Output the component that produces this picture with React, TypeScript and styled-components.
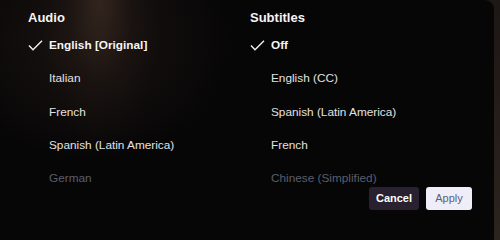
import React from "react";
import styled, { createGlobalStyle } from "styled-components";

const Global = createGlobalStyle`
  html, body { margin: 0; padding: 0; background: #070607; }
  body { width: 500px; min-height: 219px; overflow: hidden; }
  #root { width: 500px; }
`;

const Screen = styled.div`
  width: 500px;
  height: 100vh;
  min-height: 219px;
  display: flex;
  background: linear-gradient(180deg, #1d1715 0%, #2b231e 100%);
`;

const Panel = styled.div`
  width: 494px;
  height: 100%;
  box-sizing: border-box;
  padding: 10px 0 0 28px;
  border-radius: 0 9px 0 0;
  background:
    radial-gradient(ellipse 60px 150px at 100px 0px, rgba(58, 42, 33, 0.8), rgba(40, 28, 22, 0.3) 55%, rgba(0, 0, 0, 0) 100%),
    radial-gradient(ellipse 140px 120px at 90px 40px, rgba(36, 27, 23, 0.65), rgba(0, 0, 0, 0) 100%),
    #070607;
  font-family: "Liberation Sans", Arial, sans-serif;
  display: flex;
  flex-direction: column;
`;

const Columns = styled.div`
  display: grid;
  grid-template-columns: 222px 1fr;
`;

const Column = styled.div`
  display: flex;
  flex-direction: column;
`;

const Heading = styled.div`
  font-size: 13px;
  line-height: 16px;
  font-weight: 700;
  color: #f4f4f4;
  margin-bottom: 11px;
`;

const List = styled.div`
  display: flex;
  flex-direction: column;
  gap: 17.3px;
`;

const Row = styled.div<{ $state: "selected" | "normal" | "dim" }>`
  display: flex;
  align-items: center;
  height: 16px;
  line-height: 16px;
  font-size: 11.8px;
  font-weight: ${(p) => (p.$state === "selected" ? 700 : 400)};
  color: ${(p) =>
    p.$state === "selected" ? "#f6f6f6" : p.$state === "dim" ? "#5a5e6a" : "#e2e2e2"};
`;

const CheckSlot = styled.span`
  width: 21px;
  flex: none;
  display: flex;
  align-items: center;
`;

const Footer = styled.div`
  display: flex;
  justify-content: flex-end;
  gap: 7px;
  padding-right: 22px;
  margin-top: 0.5px;
`;

const Button = styled.button<{ $primary?: boolean }>`
  height: 23px;
  border: none;
  border-radius: 3px;
  font-family: "Liberation Sans", Arial, sans-serif;
  font-size: 11px;
  padding: 0;
  cursor: pointer;
  width: ${(p) => (p.$primary ? "46px" : "50px")};
  background: ${(p) => (p.$primary ? "#efeef8" : "#2a2130")};
  color: ${(p) => (p.$primary ? "#5b5e78" : "#ffffff")};
  font-weight: ${(p) => (p.$primary ? 400 : 700)};
`;

const Check = () => (
  <svg width="15" height="11" viewBox="0 0 15 11">
    <path d="M1 5.6 L5 9.8 L14 0.8" fill="none" stroke="#f2f2f2" strokeWidth="1.4" />
  </svg>
);

type Item = { label: string; state: "selected" | "normal" | "dim" };

const audio: Item[] = [
  { label: "English [Original]", state: "selected" },
  { label: "Italian", state: "normal" },
  { label: "French", state: "normal" },
  { label: "Spanish (Latin America)", state: "normal" },
  { label: "German", state: "dim" },
];

const subtitles: Item[] = [
  { label: "Off", state: "selected" },
  { label: "English (CC)", state: "normal" },
  { label: "Spanish (Latin America)", state: "normal" },
  { label: "French", state: "normal" },
  { label: "Chinese (Simplified)", state: "dim" },
];

const Section = ({ title, items }: { title: string; items: Item[] }) => (
  <Column>
    <Heading>{title}</Heading>
    <List>
      {items.map((it) => (
        <Row key={it.label} $state={it.state}>
          <CheckSlot>{it.state === "selected" && <Check />}</CheckSlot>
          {it.label}
        </Row>
      ))}
    </List>
  </Column>
);

export default function App() {
  return (
    <>
      <Global />
      <Screen>
        <Panel>
          <Columns>
            <Section title="Audio" items={audio} />
            <Section title="Subtitles" items={subtitles} />
          </Columns>
          <Footer>
            <Button>Cancel</Button>
            <Button $primary>Apply</Button>
          </Footer>
        </Panel>
      </Screen>
    </>
  );
}
